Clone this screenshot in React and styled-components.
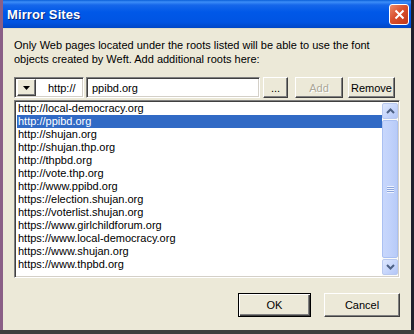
import React from "react";
import styled, { createGlobalStyle } from "styled-components";

const GlobalStyle = createGlobalStyle`
  html, body { margin: 0; padding: 0; background: #3f3f3f; }
  #root { width: 414px; height: 334px; overflow: hidden; }
  * { box-sizing: border-box; }
`;

const Screen = styled.div`
  width: 414px;
  height: 334px;
  display: flex;
  flex-direction: column;
  background: #3f3f3f;
  font-family: "Liberation Sans", Arial, sans-serif;
  font-size: 11px;
  color: #000;
`;

const Window = styled.div`
  width: 414px;
  height: 330px;
  display: flex;
  flex-direction: column;
  border-left: 3px solid #8a5f86;
  border-right: 3px solid #20202c;
`;

const TitleBar = styled.div`
  height: 28px;
  flex: none;
  display: flex;
  align-items: center;
  justify-content: space-between;
  padding: 0 2px 0 4px;
  background: linear-gradient(
    to bottom,
    #0a5fd8 0px,
    #3d8ef8 2px,
    #1667ea 5px,
    #0058e8 12px,
    #0054e3 22px,
    #0047c6 28px
  );
`;

const Title = styled.span`
  font-family: "Liberation Sans", Arial, sans-serif;
  font-weight: bold;
  font-size: 13px;
  color: #fff;
  text-shadow: 1px 1px 0 #0a2a7a;
  letter-spacing: 0.1px;
`;

const CloseButton = styled.div`
  width: 20px;
  height: 21px;
  border: 1px solid #fff;
  border-radius: 3px;
  background: linear-gradient(135deg, #ec8b6a 0%, #d9502d 45%, #c0381a 100%);
  display: flex;
  align-items: center;
  justify-content: center;
`;

const Body = styled.div`
  flex: 1;
  background: #ece9d8;
  border-top: 1px solid #e3dfca;
  display: flex;
  flex-direction: column;
  padding: 0 11px;
`;

const Description = styled.p`
  margin: 9px 0 0 0;
  line-height: 14px;
  width: 380px;
`;

const ControlRow = styled.div`
  margin-top: 11px;
  height: 21px;
  display: flex;
  align-items: stretch;
`;

const Sunken = styled.div`
  background: #fff;
  border: 1px solid;
  border-color: #808080 #fff #fff #808080;
  box-shadow: inset 1px 1px 0 #404040, inset -1px -1px 0 #d4d0c8;
`;

const Combo = styled(Sunken)`
  width: 70px;
  display: flex;
  align-items: center;
  padding: 2px;
`;

const DropButton = styled.div`
  width: 19px;
  height: 17px;
  background: #ece9d8;
  border: 1px solid;
  border-color: #fff #404040 #404040 #fff;
  box-shadow: inset -1px -1px 0 #808080;
  display: flex;
  align-items: center;
  justify-content: center;
`;

const ComboText = styled.span`
  margin-left: 12px;
`;

const TextInput = styled(Sunken)`
  width: 174px;
  margin-left: 2px;
  display: flex;
  align-items: center;
  padding-left: 5px;
`;

const Button = styled.div`
  width: ${(p) => p.$w}px;
  margin-left: ${(p) => p.$ml || 0}px;
  background: #ece9d8;
  border: 1px solid;
  border-color: #fff #404040 #404040 #fff;
  box-shadow: inset -1px -1px 0 #808080;
  display: flex;
  align-items: center;
  justify-content: center;
  color: ${(p) => (p.$disabled ? "#aca899" : "#000")};
  text-shadow: ${(p) => (p.$disabled ? "1px 1px 0 #fff" : "none")};
`;

const ListBox = styled(Sunken)`
  margin-top: 2px;
  height: 178px;
  padding: 1px 1px 1px 2px;
  display: flex;
`;

const Items = styled.div`
  flex: 1;
  display: flex;
  flex-direction: column;
`;

const Item = styled.div`
  height: 13px;
  line-height: 13px;
  padding-left: 1px;
  white-space: nowrap;
  background: ${(p) => (p.$selected ? "#316ac5" : "transparent")};
  color: ${(p) => (p.$selected ? "#fff" : "#000")};
`;

const ScrollBar = styled.div`
  width: 16px;
  display: flex;
  flex-direction: column;
  background: #fbfbf8;
  padding: 1px 0;
`;

const ScrollButton = styled.div`
  height: 16px;
  flex: none;
  border: 1px solid #b9c9ef;
  border-radius: 2px;
  background: linear-gradient(135deg, #dde7fd 0%, #c4d4fb 60%, #b3c6f6 100%);
  display: flex;
  align-items: center;
  justify-content: center;
`;

const Thumb = styled.div`
  flex: 1;
  margin: 1px 0;
  border: 1px solid #aac0f2;
  border-radius: 2px;
  background: linear-gradient(to right, #c8d7fc 0%, #c1d2fb 50%, #b8cbf8 100%);
  display: flex;
  align-items: center;
  justify-content: center;
`;

const Grip = styled.div`
  width: 7px;
  height: 7px;
  background: repeating-linear-gradient(
    to bottom,
    #eef3fe 0px,
    #eef3fe 1px,
    #8ca5dc 1px,
    #8ca5dc 2px
  );
`;

const Footer = styled.div`
  margin-top: 15px;
  height: 24px;
  display: flex;
  justify-content: flex-end;
`;

const DefaultButton = styled(Button)`
  border: 1px solid #000;
  box-shadow: inset 1px 1px 0 #fff, inset -1px -1px 0 #404040,
    inset -2px -2px 0 #808080;
`;

const urls = [
  "http://local-democracy.org",
  "http://ppibd.org",
  "http://shujan.org",
  "http://shujan.thp.org",
  "http://thpbd.org",
  "http://vote.thp.org",
  "http://www.ppibd.org",
  "https://election.shujan.org",
  "https://voterlist.shujan.org",
  "https://www.girlchildforum.org",
  "https://www.local-democracy.org",
  "https://www.shujan.org",
  "https://www.thpbd.org",
];

const Chevron = ({ up }) => (
  <svg width="9" height="6" viewBox="0 0 9 6">
    <path
      d={up ? "M1 5 L4.5 1.5 L8 5" : "M1 1 L4.5 4.5 L8 1"}
      fill="none"
      stroke="#4d6185"
      strokeWidth="2"
    />
  </svg>
);

export default function App() {
  return (
    <Screen>
      <GlobalStyle />
      <Window>
        <TitleBar>
          <Title>Mirror Sites</Title>
          <CloseButton>
            <svg width="11" height="11" viewBox="0 0 11 11">
              <path d="M1.5 1.5 L9.5 9.5 M9.5 1.5 L1.5 9.5" stroke="#fff" strokeWidth="2" />
            </svg>
          </CloseButton>
        </TitleBar>
        <Body>
          <Description>
            Only Web pages located under the roots listed will be able to use the font
            objects created by Weft. Add additional roots here:
          </Description>
          <ControlRow>
            <Combo>
              <DropButton>
                <svg width="7" height="4" viewBox="0 0 7 4">
                  <path d="M0 0 H7 L3.5 4 Z" fill="#000" />
                </svg>
              </DropButton>
              <ComboText>http://</ComboText>
            </Combo>
            <TextInput>ppibd.org</TextInput>
            <Button $w={25} $ml={3}>...</Button>
            <Button $w={48} $ml={7} $disabled>Add</Button>
            <Button $w={47} $ml={5}>Remove</Button>
          </ControlRow>
          <ListBox>
            <Items>
              {urls.map((u, i) => (
                <Item key={u} $selected={i === 1}>{u}</Item>
              ))}
            </Items>
            <ScrollBar>
              <ScrollButton><Chevron up /></ScrollButton>
              <Thumb><Grip /></Thumb>
              <ScrollButton><Chevron /></ScrollButton>
            </ScrollBar>
          </ListBox>
          <Footer>
            <DefaultButton $w={73}>OK</DefaultButton>
            <Button $w={76} $ml={13}>Cancel</Button>
          </Footer>
        </Body>
      </Window>
    </Screen>
  );
}
